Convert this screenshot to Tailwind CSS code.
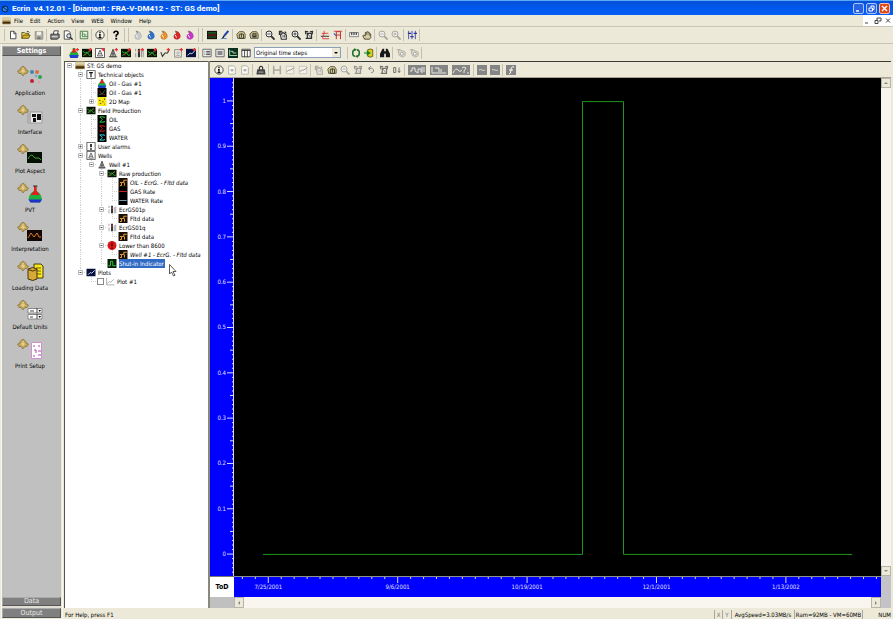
<!DOCTYPE html>
<html lang="en">
<head>
  <meta charset="UTF-8" />
  <meta name="viewport" content="width=device-width, initial-scale=1.0"/>
  <title>Ecrin v4.12.01 - [Diamant : FRA-V-DM412 - ST: GS demo]</title>
  <script src="https://cdn.jsdelivr.net/npm/@tailwindcss/browser@4"></script>
</head>
<body class="h-screen flex flex-col overflow-hidden bg-[#ece9d8] text-black text-[6px] leading-[9px] font-['DejaVu_Sans_Condensed','DejaVu_Sans',sans-serif]">

  <!-- icon sprites, 12x12 unless noted -->
  <svg class="hidden" xmlns="http://www.w3.org/2000/svg">
    <symbol id="new" viewBox="0 0 12 12"><path d="M3 1.5h4l2.500 2.500v6.500h-6.500z" fill="#fff" stroke="#333"/><path d="M7 1.500v3h2.500" fill="none" stroke="#333"/></symbol>
    <symbol id="open" viewBox="0 0 12 12"><path d="M1 10V3h3l1 1h4v2" fill="#f4d860" stroke="#554a10"/><path d="M1 10l2-4h8l-2 4z" fill="#d8b020" stroke="#554a10"/><path d="M7 2q2-1 3 1" fill="none" stroke="#222"/></symbol>
    <symbol id="save" viewBox="0 0 12 12"><path d="M1.500 2h9v9h-9z" fill="#b8b5a8" stroke="#8a887c"/><path d="M3.500 2h5v4h-5z" fill="#eee"/><path d="M4 8h4v3H4z" fill="#777"/></symbol>
    <symbol id="print" viewBox="0 0 12 12"><path d="M4 5l1-4h5L9 5" fill="#fff" stroke="#222"/><path d="M1 5h10v4l-2 2H1z" fill="#888" stroke="#222"/><path d="M2 8h7" stroke="#eee"/></symbol>
    <symbol id="preview" viewBox="0 0 12 12"><path d="M1.500 1h5l2 2v8h-7z" fill="#fff" stroke="#333"/><circle cx="7" cy="7" r="2.500" fill="#cfe0e8" stroke="#222"/><path d="M9 9l2.500 2.500" stroke="#222" stroke-width="1.500"/></symbol>
    <symbol id="graph" viewBox="0 0 12 12"><path d="M1.500 1.500h9v9h-9z" fill="#e8f4e0" stroke="#357035"/><path d="M4 2v6h6M6 4v2h3" fill="none" stroke="#357035"/></symbol>
    <symbol id="info" viewBox="0 0 12 12"><circle cx="6" cy="6" r="5" fill="#f4f2e6" stroke="#333"/><path d="M6 2.500v1.500M4.800 5.500H6V9M4.200 9h3.600" fill="none" stroke="#000" stroke-width="1.500"/></symbol>
    <symbol id="help" viewBox="0 0 12 12"><path d="M3.500 4q0-2.500 2.500-2.500T8.500 4Q8.500 5 6.300 6.300V8" fill="none" stroke="#000" stroke-width="2"/><path d="M5.200 9.300h2.200v2.200H5.200z"/></symbol>
    <symbol id="drop" viewBox="0 0 12 12"><path d="M4 1q5 1 6 5t-3.500 5.500Q2 11.500 2 7.500q0-2 3-3z" fill="currentColor" stroke="#0002"/><path d="M4 6q0 2 2 3" stroke="#fff" fill="none"/><path d="M3 1l3 1-1 2z" fill="#776"/></symbol>
    <symbol id="monitor" viewBox="0 0 12 12"><path d="M0 1h12v10H0z" fill="#101010"/><path d="M1 3.500h10" stroke="#20a030"/><path d="M1 6h10" stroke="#c02020"/><path d="M1 8.500h10" stroke="#308030"/></symbol>
    <symbol id="pen" viewBox="0 0 12 12"><path d="M10 1L5 7" stroke="#2040b0" stroke-width="2.500"/><path d="M5 7l-2 3" stroke="#111" stroke-width="1.500"/><path d="M1 10.500q4-1 7 0" fill="none" stroke="#4070d0"/></symbol>
    <symbol id="hand" viewBox="0 0 12 12"><path d="M3 11L1 7l1-1 2 1V3q1-1 1.500 0Q6 1 7 2.500 8.500 2 9 4q1.500 0 1.500 2v3L9 11z" fill="#d8cfa4" stroke="#3b3520"/><path d="M5.500 3v3M7.300 3v3M9 4v3" stroke="#3b3520" stroke-width=".6"/></symbol>
    <symbol id="camera" viewBox="0 0 12 12"><path d="M1 5l3-3h5l2 3v5H2z" fill="#d5cc9c" stroke="#4a442a"/><path d="M4 5h5v5H4z" fill="none" stroke="#332"/><path d="M6.500 4v5" stroke="#332"/></symbol>
    <symbol id="cam2" viewBox="0 0 12 12"><path d="M1 5l3-3h5l2 3v5H2z" fill="#c8bf8c" stroke="#4a442a"/><path d="M4 4h5v5H4z" fill="#333"/><path d="M5 6h3" stroke="#dd9"/></symbol>
    <symbol id="mag" viewBox="0 0 12 12"><circle cx="4.800" cy="4.800" r="3.600" fill="#eee" stroke="currentColor" stroke-width="1.200"/><path d="M3 4.800h3.600" stroke="currentColor"/><path d="M7.500 7.500l4 4" stroke="currentColor" stroke-width="2.200"/></symbol>
    <symbol id="magp" viewBox="0 0 12 12"><circle cx="4.800" cy="4.800" r="3.600" fill="#eee" stroke="currentColor" stroke-width="1.200"/><path d="M3 4.800h3.600M4.800 3v3.600" stroke="currentColor"/><path d="M7.500 7.500l4 4" stroke="currentColor" stroke-width="2.200"/></symbol>
    <symbol id="pan" viewBox="0 0 12 12"><path d="M1 1h4v2H3v3H1z" fill="currentColor"/><path d="M3 6l3-3 4 3v5H4z" fill="#eee" stroke="currentColor" stroke-width="1.300"/><path d="M6 6v3M8 6v3" stroke="currentColor"/><path d="M8 2l2 2" stroke="currentColor" stroke-width="1.500"/></symbol>
    <symbol id="fit" viewBox="0 0 12 12"><path d="M1 2h4M2 1v4M7 2h4M10 1v4M2 10h3" stroke="currentColor" stroke-width="1.500"/><path d="M4 4h5v6H4z" fill="#eee" stroke="currentColor" stroke-width="1.500"/><path d="M5 5l3 4" stroke="currentColor"/></symbol>
    <symbol id="axis" viewBox="0 0 12 12"><path d="M1 7.500h10" stroke="#333" stroke-width="1.200"/><path d="M2 4h8M3 10.500h8M5 1v3l-2 6" fill="none" stroke="#d03030"/></symbol>
    <symbol id="flag" viewBox="0 0 12 12"><path d="M4 11V2h5v9M4 6h5" fill="none" stroke="#d03030" stroke-width="1.200"/><path d="M1 1.500h10" stroke="#d03030"/><path d="M1 4l3 3" stroke="#3550b0" stroke-width="1.300"/></symbol>
    <symbol id="ruler" viewBox="0 0 12 12"><path d="M.5 3h11v5H.5z" fill="#eee" stroke="#777"/><path d="M3 3v3M5 3v3M7 3v3M9 3v3" stroke="#333"/></symbol>
    <symbol id="sliders" viewBox="0 0 12 12"><path d="M2 1v10M6 1v10M10 1v10" stroke="#2838a0"/><path d="M1 4h4M4 8h4M8 4h4" stroke="#2838a0" stroke-width="1.500"/></symbol>
    <symbol id="pvt" viewBox="0 0 12 12"><path d="M4.500 0h3v3Q11 5 11.500 9L10 12H2L.5 9Q1 5 4.500 3z" fill="#20b040"/><path d="M4.500 1h3v2l2 2.500h-7L4.500 3z" fill="#e02020"/><path d="M.5 8.500h11L10.500 12h-9z" fill="#2040d0"/></symbol>
    <symbol id="field" viewBox="0 0 12 12"><path d="M0 1h12v10H0z" fill="#041004"/><path d="M1 4l3 2 2-1 3 4 2-1M1.500 9l4-2 4-4" fill="none" stroke="#30b030" stroke-width="1.200"/><path d="M3 7l2 2M8 4l2 1" stroke="#d03030"/></symbol>
    <symbol id="well" viewBox="0 0 12 12"><path d="M6 1.500L2.500 10.500h7z" fill="#bbb" stroke="#444"/><path d="M4 7h4M6 2v8M1 10.500h10" fill="none" stroke="#444"/></symbol>
    <symbol id="wellbox" viewBox="0 0 12 12"><path d="M.5.5h11v11H.5z" fill="#fff" stroke="#333"/><path d="M6 2.500L3 9.500h6zM4.500 7h3" fill="none" stroke="#444"/></symbol>
    <symbol id="gauge" viewBox="0 0 12 12"><path d="M2 1v3M2 6v5M9 3v8M11 2v9" stroke="#888"/><path d="M6 1v10" stroke="#333" stroke-width="2.600"/><path d="M6 3v2" stroke="#e04040" stroke-width="1.500"/></symbol>
    <symbol id="curve" viewBox="0 0 12 12"><path d="M1 5l2 5 3-4h3l2-4" fill="none" stroke="#333" stroke-width="1.300"/></symbol>
    <symbol id="doc" viewBox="0 0 12 12"><path d="M2 2h8v9H2z" fill="#f4f2e6" stroke="#777"/><path d="M4 5h4M4 7h4M4 9h4" stroke="#999"/></symbol>
    <symbol id="plotb" viewBox="0 0 12 12"><path d="M0 1h12v10H0z" fill="#08103c"/><path d="M2 9l3-3 2 1 4-4" fill="none" stroke="#d8e0ff" stroke-width="1.200"/></symbol>
    <symbol id="star" viewBox="0 0 12 12"><path d="M10 0v4M8 2h4" stroke="#e83030" stroke-width="1.400"/></symbol>
    <symbol id="list" viewBox="0 0 12 12"><path d="M1 1.500h10v9H1z" fill="#fff" stroke="#555"/><path d="M3 4h1M3 6h1M3 8h1M5 4h5M5 6h5M5 8h5" stroke="#222"/></symbol>
    <symbol id="panel" viewBox="0 0 12 12"><path d="M1 1.500h10v9H1z" fill="#eee" stroke="#555"/><path d="M3 3.500h6v5H3z" fill="#888"/></symbol>
    <symbol id="plot" viewBox="0 0 12 12"><path d="M0 0h12v12H0z" fill="#0c3020"/><path d="M2 2v7h9M3 4h3v2h4" fill="none" stroke="#c0f0c0"/></symbol>
    <symbol id="cols" viewBox="0 0 12 12"><path d="M1 1.500h10v9H1z" fill="#fff" stroke="#333"/><path d="M1 3h10M4.300 2v9M7.600 2v9" stroke="#333"/></symbol>
    <symbol id="refresh" viewBox="0 0 12 12"><path d="M5 2Q2 2 2 6t3 4M7 2q3 0 3 4t-3 4" fill="none" stroke="#207028" stroke-width="1.800"/><path d="M4 0l3 2-3 2zM8 8l-3 2 3 2z" fill="#207028"/></symbol>
    <symbol id="load" viewBox="0 0 12 12"><path d="M4.500 2q3-1.500 6 0v8q-3 2-6 0z" fill="#d8d020" stroke="#555508"/><path d="M0 6h5M4 4l3 2-3 2z" fill="#108020" stroke="#108020" stroke-width="1.300"/></symbol>
    <symbol id="find" viewBox="0 0 12 12"><path d="M3 1h2v3h2V1h2l3 6v4H7V7H5v4H0V7z" fill="#181818"/></symbol>
    <symbol id="gear" viewBox="0 0 12 12"><path d="M3 2l4 1 4 2v4l-3 2-4-2-1-3z" fill="#dcd9cc" stroke="#aaa89c"/><circle cx="7" cy="7" r="1.800" fill="#fff" stroke="#999"/><path d="M1 2h4" stroke="#aaa89c"/></symbol>
    <symbol id="page" viewBox="0 0 12 12"><path d="M2 1h6l2 2v8H2z" fill="#fbfaf4" stroke="#aaa89c"/><path d="M4 6h4M6 5v3" stroke="#888"/></symbol>
    <symbol id="lock" viewBox="0 0 12 12"><path d="M4 6V3q2-3 4 0v3" fill="none" stroke="#222" stroke-width="1.300"/><path d="M1.500 5h9l1 6.500H.5z" fill="#444"/><path d="M3 8.500h6" stroke="#ccc"/></symbol>
    <symbol id="hbar" viewBox="0 0 12 12"><path d="M2 1v10M10 1v10M2 6h8" stroke="#aaa89c" stroke-width="1.800"/></symbol>
    <symbol id="line" viewBox="0 0 12 12"><path d="M1.500 1.500h9v9h-9z" fill="#f4f2e8" stroke="#c4c1b4"/><path d="M2 8l3-2 2 0 4-3" fill="none" stroke="#99978c" stroke-width="1.200"/></symbol>
    <symbol id="undo" viewBox="0 0 12 12"><path d="M3 4h4q3 1 2 4L6 9.500M3 4l3-2.500M3 4l2 2.500" fill="none" stroke="#8c8a80" stroke-width="1.200"/></symbol>
    <symbol id="zero" viewBox="0 0 12 12"><path d="M2 3h2.500v6H2zM8.500 3v6M7 7l1.500 2L10 7" fill="none" stroke="#77756c" stroke-width="1.200"/></symbol>
    <symbol id="wide1" viewBox="0 0 18 10"><path d="M0 0h18v10H0z" fill="#858585"/><path d="M2 6h2V3h3v3l3 2V4h3v3M14 2v6M16 2v5" fill="none" stroke="#e8e8e0"/></symbol>
    <symbol id="wide2" viewBox="0 0 18 10"><path d="M0 0h18v10H0z" fill="#858585"/><path d="M2 2v6h14M5 3h4v4M11 7V4" fill="none" stroke="#e8e8e0"/></symbol>
    <symbol id="wide3" viewBox="0 0 18 10"><path d="M0 0h18v10H0z" fill="#858585"/><path d="M1 8q3-6 5-3t4 0M10 3q2-2 4 0l-2 3v2M15 8h2" fill="none" stroke="#e8e8e0"/></symbol>
    <symbol id="gminus" viewBox="0 0 10 10"><path d="M0 0h10v10H0z" fill="#858585"/><path d="M2 5q2-1 3 0t3 0" fill="none" stroke="#d8d8d0"/></symbol>
    <symbol id="gfx" viewBox="0 0 10 10"><path d="M0 0h10v10H0z" fill="#858585"/><path d="M3 9q2 0 2-4t3-3M3 5h4" fill="none" stroke="#fff"/></symbol>

    <!-- tree icons -->
    <symbol id="t-app" viewBox="0 0 12 12"><path d="M0 1h12v10H0z" fill="#b8985c"/><path d="M0 1h12v4H0z" fill="#dcd0a8"/><path d="M0 7h12v3H0z" fill="#403010"/></symbol>
    <symbol id="t-tech" viewBox="0 0 12 12"><path d="M.5.5h11v11H.5z" fill="#fff" stroke="#333"/><path d="M3.500 3.500h5M6 3.500v6" stroke="#111" stroke-width="1.500"/></symbol>
    <symbol id="t-alarm" viewBox="0 0 12 12"><path d="M.5.5h11v11H.5z" fill="#fff" stroke="#333"/><path d="M6 2.500V7M6 8.200v2" stroke="#111" stroke-width="2.200"/></symbol>
    <symbol id="t-kr" viewBox="0 0 12 12"><path d="M0 0h12v12H0z"/><path d="M2 3q3 6 8 6" fill="none" stroke="#d02020"/><path d="M2 9q5 0 8-6" fill="none" stroke="#20a030"/></symbol>
    <symbol id="t-map" viewBox="0 0 12 12"><path d="M0 0h12v12H0z" fill="#f8e818"/><path d="M2 4h2v1H2zM6 6h2v1H6zM9 2h1v2H9zM3 8h2v1H3zM9 9h1v1H9z" fill="#503000"/></symbol>
    <symbol id="t-sum" viewBox="0 0 12 12"><path d="M0 0h12v12H0z" fill="#000"/><path d="M9 4V2.500H3L6.500 6 3 9.500h6V8" fill="none" stroke="currentColor" stroke-width="1.300"/></symbol>
    <symbol id="t-data" viewBox="0 0 12 12"><path d="M0 0h12v12H0z" fill="#181008"/><path d="M2 10h2V6h3V3h4M2 6h2M8 6v4" fill="none" stroke="#f0a030" stroke-width="1.300"/></symbol>
    <symbol id="t-rate" viewBox="0 0 12 12"><path d="M0 0h12v12H0z" fill="#000"/><path d="M1 6h10" stroke="currentColor" stroke-width="1.300"/></symbol>
    <symbol id="t-stop" viewBox="0 0 12 12"><circle cx="6" cy="6" r="6" fill="#d81818"/><path d="M6 2v5M6 8.500v2" stroke="#400" stroke-width="1.800"/></symbol>
    <symbol id="t-shut" viewBox="0 0 12 12"><path d="M0 0h12v12H0z" fill="#042008"/><path d="M1 9h3V3h3v6h4" fill="none" stroke="#30c040" stroke-width="1.300"/></symbol>
    <symbol id="t-plot" viewBox="0 0 12 12"><path d="M1.500 1v9.500H12" fill="none" stroke="#999"/><path d="M2 9l3-3 2 1 4-4" fill="none" stroke="#999"/></symbol>

    <!-- sidebar icons, 28x22 -->
    <symbol id="s-tag" viewBox="0 0 28 22"><path d="M7 1l3 2.500V5l2.500 1L11 8.500H9L7 11 5 8.500H3L1.500 6 4 5V3.500z" fill="#c4a658" stroke="#8c7640" stroke-width=".8"/><path d="M7 3v5M5 6h4" stroke="#ecdca0"/></symbol>
    <symbol id="s-app" viewBox="0 0 28 22"><circle cx="16" cy="7" r="2" fill="#3888b0"/><circle cx="21" cy="7" r="2" fill="#d87040"/><circle cx="24" cy="12" r="2" fill="#30a050"/><circle cx="16" cy="16" r="2" fill="#c02030"/><circle cx="20" cy="11" r="1.300" fill="#60b0d0"/><circle cx="23" cy="17" r="1.200" fill="#e0a0a0"/></symbol>
    <symbol id="s-int" viewBox="0 0 28 22"><path d="M12 8h14v11H12z" fill="#e8e8e8" stroke="#999"/><path d="M12 8h3v11h-3z" fill="#b0b0b0"/><path d="M16 10h4v3h-4zM21 10h4v6h-4zM17 14h3v4h-3z" fill="#111"/></symbol>
    <symbol id="s-asp" viewBox="0 0 28 22"><path d="M11 9h15v11H11z" fill="#041004"/><path d="M12 16q3-6 5-3t4 2 4 2" fill="none" stroke="#40a030"/></symbol>
    <symbol id="s-pvt" viewBox="0 0 28 22"><path d="M18 4h2.500v5Q25 11 26 17l-2 3.500H14.500l-2-3.500Q13.500 11 18 9z" fill="#20b040"/><path d="M18 4h2.500v5l3.500 4H14.500L18 9z" fill="#e02020"/><path d="M12.500 17.500H26l-2 3H14.500z" fill="#2030d0"/><path d="M17 4h4.500" stroke="#333"/></symbol>
    <symbol id="s-itp" viewBox="0 0 28 22"><path d="M11 9h15v11H11z" fill="#140804"/><path d="M12 17l3-5 3 4 3-4 2 4h2" fill="none" stroke="#e07820"/></symbol>
    <symbol id="s-load" viewBox="0 0 28 22"><path d="M18 4h7l2 2v12h-9z" fill="#f8e820" stroke="#443c08"/><path d="M20 8h5M20 11h5M20 14h5" stroke="#665c10"/><path d="M12 9q5-3 9 0v10q-4 3-9 0z" fill="#d8a838" stroke="#443408"/><path d="M12 9.500q5 3 9 0" fill="none" stroke="#443408"/></symbol>
    <symbol id="s-unit" viewBox="0 0 28 22"><path d="M12 9.500h14v4.500H12zM12 15.500h14v4.500H12z" fill="#fff" stroke="#888"/><path d="M14 12h4M14 18h3M21 9v5M21 15v5" stroke="#444"/><path d="M22.500 11h2.500l-1.200 2zM22.500 17h2.500l-1.200 2z"/></symbol>
    <symbol id="s-prn" viewBox="0 0 28 22"><path d="M15.500 4.500h10v16h-10z" fill="#fff" stroke="#d090d0"/><path d="M17 8h2M22 8h2M18 12h2v3M22 13h3M22 17h3M17 18h2" fill="none" stroke="#b040b0"/></symbol>
  </svg>

  <header class="h-[15px] shrink-0 flex items-center pl-px pr-[3px] gap-[2px] border-t border-[#5aa8f8] bg-linear-to-b from-[#0850d8] via-[#0058ee] to-[#0560f8]">
    <svg class="size-[9px]"><circle cx="4" cy="5" r="3" fill="#3088d0" stroke="#042060"/><path d="M2 3l5 4" stroke="#0a2860"/></svg>
    <h1 class="flex-1 text-white text-[8px] font-bold whitespace-pre font-['Roboto',sans-serif]">Ecrin  v4.12.01 - [Diamant : FRA-V-DM412 - ST: GS demo]</h1>
    <div class="flex gap-[2px]">
      <button aria-label="Minimize" class="size-[11px] rounded-[2px] border border-[#a8c4f8] bg-[#2a62e4]"><svg class="size-[9px]"><path d="M2 7h3" stroke="#fff" stroke-width="1.500"/></svg></button>
      <button aria-label="Restore" class="size-[11px] rounded-[2px] border border-[#a8c4f8] bg-[#2a62e4]"><svg class="size-[9px]"><path d="M2 4h3.500v3H2zM4 3.500V2h3v3.500H6" fill="none" stroke="#fff"/></svg></button>
      <button aria-label="Close" class="size-[11px] rounded-[2px] border border-[#f4c0a8] bg-[#e0481c]"><svg class="size-[9px]"><path d="M2 2l5 5M7 2L2 7" stroke="#fff" stroke-width="1.400"/></svg></button>
    </div>
  </header>

  <nav class="h-[12px] shrink-0 flex items-center gap-[7px] pl-[2px] border-b border-[#c8c5b4]">
    <svg class="w-[9px] h-[8px] mr-[-4px]"><use href="#t-app"/></svg>
    <a href="#">File</a><a href="#">Edit</a><a href="#">Action</a><a href="#">View</a><a href="#">WEB</a><a href="#">Window</a><a href="#">Help</a>
    <div class="ml-auto flex h-full items-center bg-white">
      <button aria-label="Minimize document"><svg class="w-[10px] h-[9px]"><path d="M2 7h3" stroke="#444"/></svg></button>
      <button aria-label="Restore document"><svg class="w-[10px] h-[9px]"><path d="M2 4.500h3v3H2zM4 4V2h4v3H6" fill="none" stroke="#444"/></svg></button>
      <button aria-label="Close document"><svg class="w-[10px] h-[9px]"><path d="M3 2.500l4 4M7 2.500l-4 4" stroke="#444"/></svg></button>
    </div>
  </nav>

  <div id="mainbar" role="toolbar" aria-label="Main" class="h-[17px] shrink-0 flex items-center pl-[3px] border-b border-[#c8c5b4]"></div>

  <div class="flex-1 min-h-0 flex">
    <aside class="w-[62px] shrink-0 flex flex-col ml-px pt-[2px] pb-px pr-px border-l border-r border-[#f8f7f0]">
      <button class="h-[10px] bg-[#808080] text-white text-[7px] font-bold border border-t-[#aaa] border-l-[#aaa] border-r-[#555] border-b-[#555] leading-[8px]">Settings</button>
      <div id="settings" class="flex-1 bg-[#c0c0c0] flex flex-col pt-[9px]"></div>
      <div class="flex flex-col gap-[2px] bg-[#e0ded4]">
        <button class="h-[9px] bg-[#808080] text-[#e8e8e8] text-[7px] leading-[7px] border border-t-[#aaa] border-l-[#aaa] border-r-[#555] border-b-[#555]">Data</button>
        <button class="h-[10px] bg-[#808080] text-[#e8e8e8] text-[7px] leading-[8px] border border-t-[#aaa] border-l-[#aaa] border-r-[#555] border-b-[#555]">Output</button>
      </div>
    </aside>

    <div class="flex-1 min-w-0 flex flex-col">
      <div class="h-[17px] shrink-0 flex items-center pl-[4px]">
        <div id="objbar" role="toolbar" aria-label="Objects" class="flex items-center"></div>
        <select aria-label="Time steps" class="w-[87px] h-[11px] ml-[2px] pl-px bg-white border border-[#8ba0b8] appearance-none"><option>Original time steps</option></select>
        <svg class="w-[8px] h-[9px] ml-[-9px] mr-[6px] bg-[#ece9d8] pointer-events-none"><path d="M2 4h4l-2 2z"/></svg>
        <div id="toolbar2" role="toolbar" aria-label="Tools" class="flex items-center"></div>
      </div>

      <main class="flex-1 min-h-0 flex pl-px">
        <section class="relative w-[144px] shrink-0 bg-white border-t border-l border-[#55534a]">
          <ul id="tree" role="tree" class="-mt-px"></ul>
          <svg class="absolute left-[104px] top-[202px] w-[9px] h-[13px]"><path d="M.5.500v9.500l2-2 2 4 1.500-.700-2-3.800h3z" fill="#fff" stroke="#333" stroke-width=".8"/></svg>
        </section>

        <section class="flex-1 min-w-0 flex flex-col border-l-2 border-[#8a887c] mr-[2px]">
          <div id="plotbar" role="toolbar" aria-label="Plot" class="h-[17px] shrink-0 flex items-center pl-[2px] border-t border-t-[#3c3a34] border-b border-b-[#a8a598]"></div>
          <div class="flex-1 min-h-0 grid grid-cols-[24px_1fr_10px] grid-rows-[1fr_21px_11px]">
            <svg id="yaxis" class="w-full h-full bg-[#0000ff]" fill="#e0e0ff" stroke="#d8d8ff"></svg>
            <svg class="w-full h-full bg-black" viewBox="0 0 647 496" preserveAspectRatio="none"><polyline points="29,474.500 348.500,474.500 348.500,23.500 389.500,23.500 389.500,474.500 618,474.500" fill="none" stroke="#1c961c" vector-effect="non-scaling-stroke"/></svg>
            <div class="bg-[#f6f4ec] flex flex-col justify-between">
              <button aria-label="Scroll up" class="h-[10px] bg-[#ece9d8] border border-[#b8b5a8]"><svg class="size-[8px]"><path d="M2 5l2-2 2 2z" fill="#888"/></svg></button>
              <button aria-label="Scroll down" class="h-[10px] bg-[#ece9d8] border border-[#b8b5a8]"><svg class="size-[8px]"><path d="M2 3l2 2 2-2z" fill="#888"/></svg></button>
            </div>
            <div class="bg-white flex items-center justify-center font-bold text-[7px] border-t border-[#777]">ToD</div>
            <svg id="xaxis" class="w-full h-full bg-[#0000ff] border-t border-[#909090]" fill="#e0e0ff" stroke="#d8d8ff"></svg>
            <div class="bg-[#c4c4c8]"></div>
            <div class="bg-[#c0c0c0]"></div>
            <div class="bg-[#f8f6ee] flex justify-between">
              <button aria-label="Scroll left" class="w-[10px] bg-[#ece9d8] border border-[#b8b5a8]"><svg class="size-[8px]"><path d="M5 2L3 4l2 2z" fill="#888"/></svg></button>
              <button aria-label="Scroll right" class="w-[10px] bg-[#ece9d8] border border-[#b8b5a8]"><svg class="size-[8px]"><path d="M3 2l2 2-2 2z" fill="#888"/></svg></button>
            </div>
            <div class="bg-[#c4c4c8]"></div>
          </div>
        </section>
      </main>

      <footer class="h-[11px] shrink-0 flex items-center pl-[2px] pr-[2px] pt-px">
        <span class="flex-1">For Help, press F1</span>
        <span class="w-[8px] text-center text-[#777] border-l border-[#aaa89c]">X</span>
        <span class="w-[9px] text-center text-[#777] border-l border-[#aaa89c]">Y</span>
        <span class="w-[63px] text-center border-l border-[#aaa89c]">AvgSpeed=3.03MB/s</span>
        <span class="w-[68px] text-center border-l border-[#aaa89c]">Ram=92MB - VM=60MB</span>
        <span class="w-[29px] text-right border-l border-[#aaa89c]">NUM</span>
      </footer>
    </div>
  </div>

  <script>
    // "|" is a narrow separator, "||" a toolbar boundary
    const seps = {
      "|": '<span class="w-[3px] h-[12px] shrink-0 flex justify-center"><i class="w-px bg-[#c4c1b0]"></i></span>',
      "||": '<span class="w-[9px] h-[14px] shrink-0 flex justify-center gap-[3px]"><i class="w-px bg-[#c4c1b0]"></i><i class="w-px bg-[#c4c1b0]"></i></span>'
    };

    function fillBar(id, items) {
      document.getElementById(id).innerHTML = items.map(item => {
        if (seps[item]) return seps[item];
        const [icon, color = "#333", star] = item.split(" ");
        if (icon.startsWith("wide")) {
          return `<button aria-label="${icon}" class="w-[22px] flex justify-center"><svg class="w-[18px] h-[10px]"><use href="#${icon}"/></svg></button>`;
        }
        return `<button aria-label="${icon}" class="w-[13px] h-[13px] flex items-center justify-center"><svg class="size-[10px]" color="${color}"><use href="#${icon}"/>${star ? '<use href="#star"/>' : ""}</svg></button>`;
      }).join("");
    }

    fillBar("mainbar", ["|", "new", "open", "save", "|", "print", "preview", "|", "graph", "|", "info", "|", "help", "||",
      "drop #c8c8cc", "drop #3070c8", "drop #e89028", "drop #d82828", "drop #c838c8", "||",
      "monitor", "pen", "|", "camera", "cam2", "|", "mag", "pan", "magp", "fit", "|", "axis", "flag", "|",
      "ruler", "hand", "|", "mag #aaa89c", "magp #aaa89c", "|", "sliders", "|"]);
    fillBar("objbar", ["pvt #333 1", "field #333 1", "wellbox #333 1", "well #333 1", "field #333 1", "gauge #333 1",
      "field #333 1", "curve #333 1", "doc #333 1", "plotb #333 1", "|", "list", "panel", "plot", "cols"]);
    fillBar("toolbar2", ["|", "refresh", "load", "|", "find", "|", "gear", "gear", "|"]);
    fillBar("plotbar", ["info", "page", "page", "|", "lock", "|", "hbar", "line", "line", "|", "pan #aaa89c", "camera",
      "mag #aaa89c", "fit #99978c", "undo", "fit #77756c", "zero", "|", "wide1", "wide2", "wide3", "|", "gminus", "gminus", "|", "gfx"]);

    const settings = [["s-app", "Application"], ["s-int", "Interface"], ["s-asp", "Plot Aspect"], ["s-pvt", "PVT"],
      ["s-itp", "Interpretation"], ["s-load", "Loading Data"], ["s-unit", "Default Units"], ["s-prn", "Print Setup"]];
    document.getElementById("settings").innerHTML = settings.map(([icon, label]) =>
      `<button class="h-[39px] w-[56px] flex flex-col items-center"><svg class="w-[28px] h-[22px] mb-px"><use href="#s-tag"/><use href="#${icon}"/></svg>${label}</button>`
    ).join("");

    // level, expander, icon, text, style, icon colour
    const tree = [
      [0, "-", "t-app", "ST: GS demo"],
      [1, "-", "t-tech", "Technical objects"],
      [2, "", "pvt", "Oil - Gas #1"],
      [2, "", "t-kr", "Oil - Gas #1"],
      [2, "+", "t-map", "2D Map"],
      [1, "-", "field", "Field Production"],
      [2, "", "t-sum", "OIL", "", "#30d040"],
      [2, "", "t-sum", "GAS", "", "#d82020"],
      [2, "", "t-sum", "WATER", "", "#40d0d8"],
      [1, "+", "t-alarm", "User alarms"],
      [1, "-", "wellbox", "Wells"],
      [2, "-", "well", "Well #1"],
      [3, "-", "field", "Raw production"],
      [4, "", "t-data", "OIL - EcrG. - Fltd data", "italic"],
      [4, "", "t-rate", "GAS Rate", "", "#d82020"],
      [4, "", "t-rate", "WATER Rate", "", "#70a0b0"],
      [3, "-", "gauge", "EcrGS01p"],
      [4, "", "t-data", "Fltd data"],
      [3, "-", "gauge", "EcrGS01q"],
      [4, "", "t-data", "Fltd data"],
      [3, "-", "t-stop", "Lower than 8600"],
      [4, "", "t-data", "Well #1 - EcrG. - Fltd data", "italic"],
      [3, "", "t-shut", "Shut-in Indicator", "bg-[#316ac5] text-white pr-px"],
      [1, "-", "plotb", "Plots"],
      [2, "", "t-plot", "Plot #1", "check"]
    ];
    const levelX = [4, 15, 26, 36, 47];

    function hasSiblingBelow(i, level) {
      for (let j = i + 1; j < tree.length; j++) {
        if (tree[j][0] === level) return true;
        if (tree[j][0] < level) return false;
      }
      return false;
    }

    document.getElementById("tree").innerHTML = tree.map(([level, box, icon, text, style = "", color = "#333"], i) => {
      const x = levelX[level];
      let guides = "";
      for (let l = 1; l <= level; l++) {
        const gx = levelX[l] + 0.5;
        const below = hasSiblingBelow(i, l);
        if (below || l === level) guides += `<path d="M${gx} 0V${below ? 9 : 5}"/>`;
      }
      guides += `<path d="M${x} 4.5h6"/>`;
      const expander = box ? `<path d="M${x - 1.5} 2.5h4v4h-4z" fill="#fff" stroke="#b8b8b8" stroke-dasharray="none"/><path d="M${x - 0.5} 4.5h2${box === "+" ? "m-1 -1v2" : ""}" stroke="#555" stroke-dasharray="none"/>` : "";
      const check = style === "check";
      return `<li role="treeitem" class="h-[9px] flex items-center whitespace-nowrap">
        <svg class="h-[9px] shrink-0" width="${x + 6}" fill="none" stroke="#d0d0d0" stroke-dasharray="1 1">${guides}${expander}</svg>
        ${check ? '<input type="checkbox" id="plot1" class="appearance-none size-[7px] border border-[#888] bg-white mr-px shrink-0">' : ""}
        <svg class="w-[10px] h-[9px] shrink-0 mr-[2px]" color="${color}" preserveAspectRatio="none"><use href="#${icon}"/></svg>
        ${check ? `<label for="plot1">${text}</label>` : `<span class="${style}">${text}</span>`}
      </li>`;
    }).join("");

    // value axis: 0..1 between 95.6% and 4.6% of the height
    let y = "";
    for (let i = -4; i <= 104; i++) {
      const p = 95.6 - i * 0.91;
      const len = i % 10 === 0 ? 7 : i % 5 === 0 ? 4 : 2;
      y += `<line x1="${24 - len}" x2="24" y1="${p}%" y2="${p}%"/>`;
      if (i % 10 === 0) y += `<text x="16" y="${p}%" dy="2" text-anchor="end" stroke="none">${i / 100}</text>`;
    }
    document.getElementById("yaxis").innerHTML = y + '<path d="M23.5 0v2000"/>';

    // date axis, one label every ten ticks
    const dates = ["7/25/2001", "9/6/2001", "10/19/2001", "12/1/2001", "1/13/2002"];
    let x = "";
    for (let i = -2; i <= 47; i++) {
      const p = 5.3 + i * 2;
      x += `<line x1="${p}%" x2="${p}%" y1="0" y2="${i % 10 === 0 ? 6 : 2}"/>`;
      if (i % 10 === 0) x += `<text x="${p}%" y="12" text-anchor="middle" stroke="none">${dates[i / 10]}</text>`;
    }
    document.getElementById("xaxis").innerHTML = x;
  </script>
</body>
</html>
